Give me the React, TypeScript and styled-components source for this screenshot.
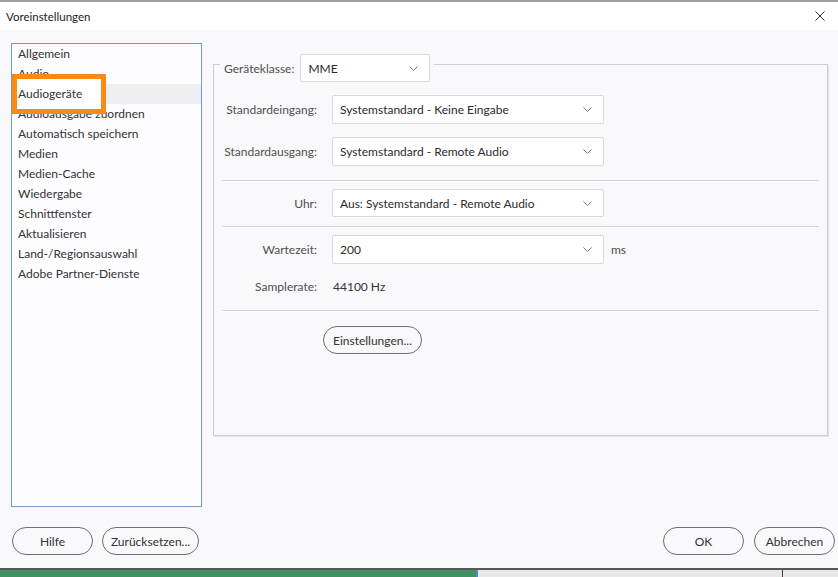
import React from "react";
import styled, { createGlobalStyle } from "styled-components";

const Global = createGlobalStyle`
  *, *::before, *::after { box-sizing: border-box; }
  html, body {
    margin: 0;
    padding: 0;
    background: #f9f8fa;
  }
  body {
    font-family: Lato, "Open Sans", "Liberation Sans", sans-serif;
  }
`;

const Window = styled.div`
  width: 838px;
  height: 577px;
  display: flex;
  flex-direction: column;
  overflow: hidden;
  background: #f9f8fa;
`;

const TitleBar = styled.div`
  height: 30px;
  border-top: 2px solid #9d9d9d;
  background: #ffffff;
  display: flex;
  align-items: center;
  justify-content: space-between;
  padding: 0 13px 0 6px;
  font-size: 11.5px;
  color: #1b1b1b;
`;

const Body = styled.div`
  flex: 1;
  display: flex;
  flex-direction: column;
  padding: 13px 3px 0 11px;
`;

const Main = styled.div`
  display: flex;
  align-items: flex-start;
  gap: 11px;
`;

const List = styled.div`
  position: relative;
  width: 191px;
  height: 464px;
  border: 1px solid #6f9dd0;
  background: #fdfcfe;
`;

const Item = styled.div<{ $selected?: boolean }>`
  height: 20px;
  line-height: 20px;
  padding-left: 6px;
  font-size: 12px;
  color: #333333;
  white-space: nowrap;
  background: ${(p) => (p.$selected ? "#efeef2" : "transparent")};
`;

const ItemText = styled.span<{ $raised?: boolean }>`
  position: ${(p) => (p.$raised ? "relative" : "static")};
  z-index: ${(p) => (p.$raised ? 2 : "auto")};
`;

const Marker = styled.div`
  position: absolute;
  left: 0;
  top: 30px;
  width: 94px;
  height: 40px;
  border: 5px solid #f98b14;
  background: #ffffff;
  z-index: 1;
`;

const Panel = styled.div`
  margin-top: 21px;
  width: 615px;
  height: 372px;
  border: 1px solid #cfcfcf;
  box-shadow: 1px 1px 0 #e3e3e3;
  padding: 0 8px;
`;

const Legend = styled.div`
  display: flex;
  align-items: center;
  gap: 6px;
  width: fit-content;
  margin: -11px 0 0 -2px;
  padding: 0 4px;
  background: #f9f8fa;
`;

const Label = styled.span<{ $align?: "left" | "right" }>`
  font-size: 12px;
  color: #505050;
  text-align: ${(p) => p.$align ?? "right"};
  white-space: nowrap;
`;

const Value = styled.span`
  font-size: 12px;
  color: #333;
  padding-left: 1px;
`;

const Select = styled.div<{ $width?: number; $height?: number }>`
  width: ${(p) => (p.$width ? `${p.$width}px` : "100%")};
  height: ${(p) => p.$height ?? 29}px;
  background: #ffffff;
  border: 1px solid #dadada;
  border-radius: 2px;
  display: flex;
  align-items: center;
  justify-content: space-between;
  padding: 0 11px 0 7px;
  font-size: 12px;
  color: #2b2b2b;
`;

const Row = styled.div<{ $top: number; $height?: number }>`
  display: grid;
  grid-template-columns: 95px 272px auto;
  column-gap: 15px;
  align-items: center;
  margin-top: ${(p) => p.$top}px;
  height: ${(p) => (p.$height ? `${p.$height}px` : "auto")};
`;

const Unit = styled.span`
  font-size: 12px;
  color: #4d4d4d;
  margin-left: -8px;
`;

const Rule = styled.div<{ $top: number }>`
  margin-top: ${(p) => p.$top}px;
  border-top: 1px solid #d3d3d3;
  border-bottom: 1px solid #ffffff;
`;

const Pill = styled.button<{ $width: number }>`
  width: ${(p) => p.$width}px;
  height: 28px;
  border: 1px solid #6f6f6f;
  border-radius: 14px;
  background: transparent;
  font-family: inherit;
  font-size: 12px;
  color: #333;
  padding: 0;
`;

const SettingsPill = styled(Pill)`
  margin: 14px 0 0 101px;
  display: block;
`;

const Footer = styled.div`
  margin-top: 20px;
  padding-left: 1px;
  display: flex;
  justify-content: space-between;
`;

const ButtonGroup = styled.div<{ $gap: number }>`
  display: flex;
  gap: ${(p) => p.$gap}px;
`;

const Strip = styled.div`
  height: 9px;
  border-top: 2px solid #585858;
  background: linear-gradient(
    to right,
    #3f9163 0 476px,
    #5b88c7 476px 478px,
    #e8e8e8 478px 782px,
    #6b2c2c 782px 783px,
    #e8e8e8 783px
  );
`;

const Chevron = () => (
  <svg width="9" height="5" viewBox="0 0 9 5">
    <polyline points="0.5,0.5 4.5,4.5 8.5,0.5" fill="none" stroke="#7a7a7a" strokeWidth="1" />
  </svg>
);

const CloseIcon = () => (
  <svg width="10" height="10" viewBox="0 0 10 10">
    <line x1="0.5" y1="0.5" x2="9.5" y2="9.5" stroke="#333" strokeWidth="1" />
    <line x1="9.5" y1="0.5" x2="0.5" y2="9.5" stroke="#333" strokeWidth="1" />
  </svg>
);

const items = [
  "Allgemein",
  "Audio",
  "Audiogeräte",
  "Audioausgabe zuordnen",
  "Automatisch speichern",
  "Medien",
  "Medien-Cache",
  "Wiedergabe",
  "Schnittfenster",
  "Aktualisieren",
  "Land-/Regionsauswahl",
  "Adobe Partner-Dienste",
];

export default function App() {
  return (
    <Window>
      <Global />
      <TitleBar>
        <span>Voreinstellungen</span>
        <CloseIcon />
      </TitleBar>
      <Body>
        <Main>
          <List>
            {items.map((name) => (
              <Item key={name} $selected={name === "Audiogeräte"}>
                <ItemText $raised={name === "Audiogeräte"}>{name}</ItemText>
              </Item>
            ))}
            <Marker />
          </List>
          <Panel>
            <Legend>
              <Label $align="left">Geräteklasse:</Label>
              <Select $width={130} $height={28}>
                <span>MME</span>
                <Chevron />
              </Select>
            </Legend>
            <Row $top={13}>
              <Label>Standardeingang:</Label>
              <Select>
                <span>Systemstandard - Keine Eingabe</span>
                <Chevron />
              </Select>
            </Row>
            <Row $top={13}>
              <Label>Standardausgang:</Label>
              <Select>
                <span>Systemstandard - Remote Audio</span>
                <Chevron />
              </Select>
            </Row>
            <Rule $top={14} />
            <Row $top={7}>
              <Label>Uhr:</Label>
              <Select $height={28}>
                <span>Aus: Systemstandard - Remote Audio</span>
                <Chevron />
              </Select>
            </Row>
            <Rule $top={9} />
            <Row $top={7}>
              <Label>Wartezeit:</Label>
              <Select>
                <span>200</span>
                <Chevron />
              </Select>
              <Unit>ms</Unit>
            </Row>
            <Row $top={14} $height={16}>
              <Label>Samplerate:</Label>
              <Value>44100 Hz</Value>
            </Row>
            <Rule $top={16} />
            <SettingsPill $width={99}>Einstellungen...</SettingsPill>
          </Panel>
        </Main>
        <Footer>
          <ButtonGroup $gap={9}>
            <Pill $width={81}>Hilfe</Pill>
            <Pill $width={97}>Zurücksetzen...</Pill>
          </ButtonGroup>
          <ButtonGroup $gap={10}>
            <Pill $width={81}>OK</Pill>
            <Pill $width={81}>Abbrechen</Pill>
          </ButtonGroup>
        </Footer>
      </Body>
      <Strip />
    </Window>
  );
}
